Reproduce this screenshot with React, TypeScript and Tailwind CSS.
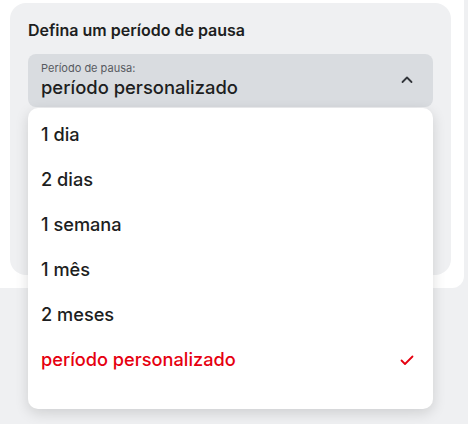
import React from "react";

const items = ["1 dia", "2 dias", "1 semana", "1 mês", "2 meses", "período personalizado"];

export default function App() {
  return (
    <div className="min-h-[424px] bg-[#eff0f2] font-['Inter','Noto_Sans',sans-serif]">
      <div className="w-[464px] bg-white rounded-br-[12px] pt-[3px] pb-[13px] pl-[10px] pr-[13px]">
        <div className="bg-[#eff0f2] rounded-[16px] h-[272px] px-[18px] pt-[18px]">
          <div className="text-[16px] leading-[19px] font-semibold text-[#1d1e21]">
            Defina um período de pausa
          </div>
          <div className="relative mt-[14px]">
            <div className="h-[53px] rounded-[8px] bg-[#d9dce0] flex items-center pl-[13px] pr-[19px]">
              <div className="flex-1">
                <div className="text-[11px] leading-[14px] text-[#575a60]">Período de pausa:</div>
                <div className="text-[18.4px] leading-[25px] font-medium text-[#1d1e21]">período personalizado</div>
              </div>
              <svg width="14" height="14" viewBox="0 0 14 14" fill="none" className="mt-[-2px]">
                <path d="M2.5 9L7 4.5L11.5 9" stroke="#33363b" strokeWidth="1.8" strokeLinecap="round" strokeLinejoin="round" />
              </svg>
            </div>
            <div className="absolute left-0 right-0 top-[54px] z-10 bg-white rounded-[10px] shadow-[0_4px_14px_rgba(0,0,0,0.14)] pt-[4px] pb-[27px]">
              {items.map((it, i) => {
                const sel = i === items.length - 1;
                return (
                  <div key={it} className="h-[45px] flex items-center pl-[13px] pr-[19px]">
                    <span className={"flex-1 text-[18.2px] font-medium " + (sel ? "text-[#e6000f]" : "text-[#1d1e21]")}>{it}</span>
                    {sel && (
                      <svg width="14" height="14" viewBox="0 0 14 14" fill="none">
                        <path d="M1.5 7.5L5 11L12.5 3.5" stroke="#e6000f" strokeWidth="1.8" strokeLinecap="round" strokeLinejoin="round" />
                      </svg>
                    )}
                  </div>
                );
              })}
            </div>
          </div>
        </div>
      </div>
    </div>
  );
}
